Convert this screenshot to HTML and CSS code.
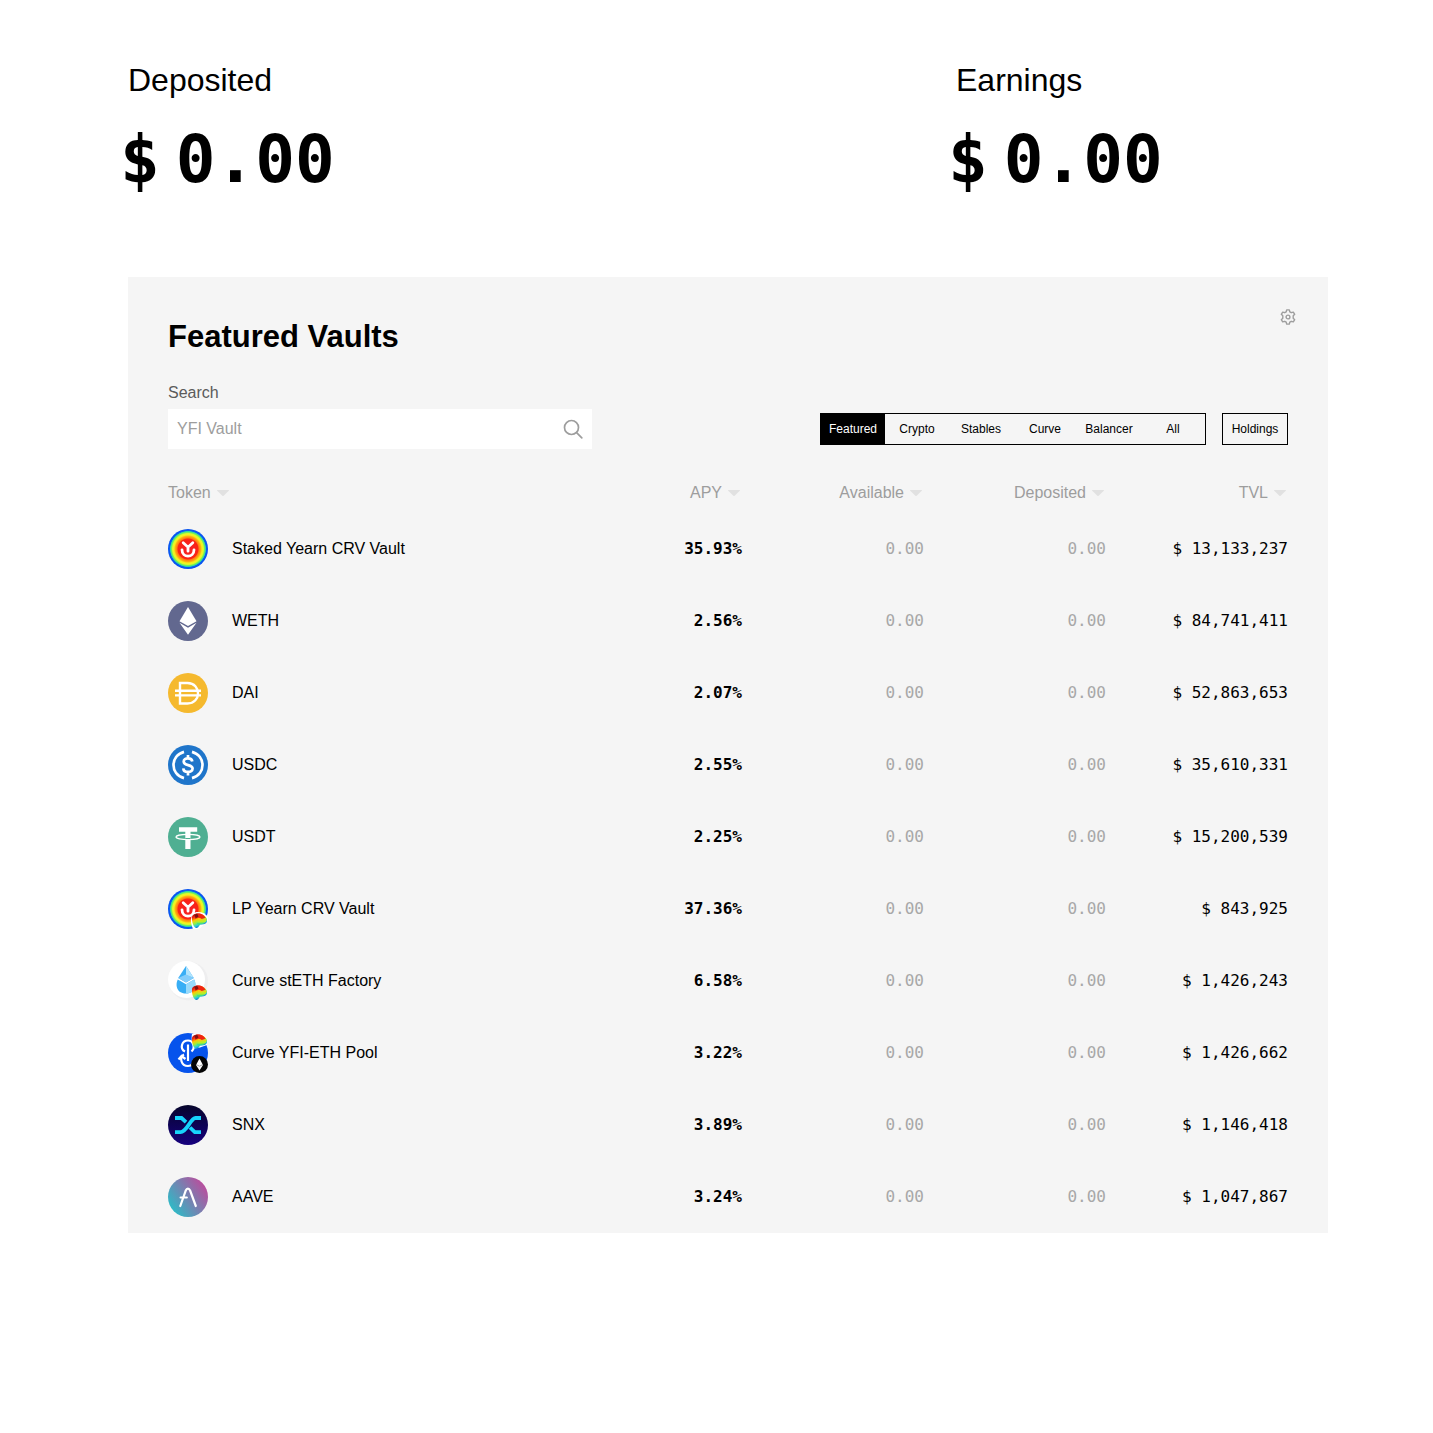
FILE: index.html
```html
<!DOCTYPE html>
<html lang="en">
<head>
<meta charset="utf-8">
<title>Vaults</title>
<meta name="viewport" content="width=device-width, initial-scale=1">
<link rel="stylesheet" href="styles.css">
</head>
<body>
<svg class="sprite" aria-hidden="true">
  <defs>
    <radialGradient id="rainbow">
      <stop offset="0" stop-color="#f5222b"/><stop offset=".5" stop-color="#fa2415"/>
      <stop offset=".55" stop-color="#ff7a12"/><stop offset=".64" stop-color="#ffb010"/>
      <stop offset=".7" stop-color="#f4f01e"/><stop offset=".77" stop-color="#e0fb28"/><stop offset=".82" stop-color="#7fee55"/>
      <stop offset=".88" stop-color="#29d9a5"/><stop offset=".91" stop-color="#0a5df2"/>
      <stop offset="1" stop-color="#0650ee"/>
    </radialGradient>
    <linearGradient id="curve-fill" x1="0" y1="0" x2=".5" y2="1">
      <stop offset="0" stop-color="#8c0d12"/><stop offset=".25" stop-color="#f22310"/>
      <stop offset=".45" stop-color="#ffc800"/><stop offset=".62" stop-color="#9cf03c"/>
      <stop offset=".8" stop-color="#20cfe0"/><stop offset="1" stop-color="#1440c8"/>
    </linearGradient>
    <linearGradient id="snx-fill" x1="0" y1="0" x2="0" y2="1"><stop offset="0" stop-color="#06052b"/><stop offset="1" stop-color="#16007e"/></linearGradient>
    <linearGradient id="aave-fill" x1="0" y1=".85" x2="1" y2=".15"><stop offset=".08" stop-color="#2ebac6"/><stop offset=".9" stop-color="#b6509e"/></linearGradient>
    <symbol id="caret" viewBox="0 0 16 16"><path d="M2.500 5h11c.5 0 .6.400.3.700L8.600 10.800a.9.9 0 0 1-1.200 0L2.200 5.700C1.900 5.400 2 5 2.500 5z" fill="currentColor"/></symbol>
    <symbol id="curve" viewBox="0 0 16 16">
      <path d="M0 4C1 0 8-.5 12 2c3 1.500 4.500 4 4 7-.5 2.500-3.500 3.500-7 3.200C7.500 13 7 16 4.500 16 1.500 15.500-.5 9 0 4z" fill="url(#curve-fill)"/>
      <path d="M4 .8C8 0 12.500 1.500 14.500 5l-4 1.500L7.500 5 3 6z" fill="#f0240f"/>
      <path d="M7 5l4 1.800 4-1.300c1.300 2-.5 4.300-4 4.700L6 9.500z" fill="#fbc912"/>
      <path d="M6 8.300l9.800-1c-.5 2.700-3.300 3.700-5.800 3.700H6z" fill="#b8ee25"/>
      <path d="M5 10.500l8.500-.3c-1.500 1.800-3 2-5 2L7 13.500z" fill="#42df84"/>
      <path d="M2.500 1.800l3-1 1.500 3-3 1.800z" fill="#7d1111"/>
    </symbol>
    <symbol id="styfi" viewBox="0 0 40 40">
      <circle cx="20" cy="20" r="20" fill="url(#rainbow)"/>
      <g fill="none" stroke="#fff" stroke-width="2.800" stroke-linecap="round"><path d="M15.200 13.800l4.800 4.400 4.800-4.400M20 18.200v4M14 20.800c0 8.500 12 8.500 12 0"/></g>
    </symbol>
    <symbol id="weth" viewBox="0 0 40 40"><circle cx="20" cy="20" r="20" fill="#62688f"/><path d="M20 6l8.500 14.200L20 25l-8.500-4.800z" fill="#fff"/><path d="M11.500 21.800L20 26.800l8.500-5L20 33.800z" fill="#fff"/></symbol>
    <symbol id="dai" viewBox="0 0 40 40"><circle cx="20" cy="20" r="20" fill="#f5b92e"/><g fill="none" stroke="#fff" stroke-width="2.400"><path d="M12 10h7.500c14 0 14 20.500 0 20.500H12zM7 17.800h26M7 22.400h26"/></g></symbol>
    <symbol id="usdc" viewBox="0 0 40 40"><circle cx="20" cy="20" r="20" fill="#1f75ca"/><g fill="none" stroke="#fff" stroke-width="2.700"><path d="M16 6.900c-14 4-14 22.200 0 26.200M24 6.900c14 4 14 22.200 0 26.200M20 10v3.500M20 27v3.500M24.300 16.500c-.4-4-8.600-4.200-8.600.1 0 4.600 8.900 2.500 8.900 7 0 4.500-9 4.500-9.300-.3"/></g></symbol>
    <symbol id="usdt" viewBox="0 0 40 40"><circle cx="20" cy="20" r="20" fill="#4faf92"/><path d="M11 10.200h18.200v4.500h-6.700V32h-5.200V14.700H11z" fill="#fff"/><ellipse cx="20" cy="20" rx="12" ry="2.600" fill="none" stroke="#fff" stroke-width="1.300"/><path d="M17.300 21.500h5.200" stroke="#4faf92" stroke-width="1"/></symbol>
    <symbol id="lpycrv" viewBox="0 0 40 40"><use href="#styfi" width="40" height="40"/><path d="M25 40c-3-6-3-14 2-16.500 6-1.500 13 1.500 14 7.500L31 40z" fill="#fff"/><use href="#curve" x="24" y="24" width="15" height="15"/></symbol>
    <symbol id="steth" viewBox="0 0 40 40">
      <circle cx="20.500" cy="20" r="19.500" fill="#eeeeef"/><circle cx="18.500" cy="18.500" r="18.500" fill="#fff"/>
      <path d="M18 5l7.800 12L18 21.500 10.200 17z" fill="#38aef5"/><path d="M18 5l7.800 12L18 14z" fill="#b2e4fd"/><path d="M10.200 17L18 13.500l7.800 3.500L18 21.500z" fill="#83cdfb"/>
      <path d="M9.800 18.500L18 23.300l8.200-4.800c2.500 4.500 1.700 14-8.200 14S7.300 23 9.800 18.500z" fill="#38aef5"/><path d="M18 23.300l8.200-4.800c2.500 4.500 1.700 14-8.200 14z" fill="#99dafb"/>
      <use href="#curve" x="24" y="24" width="15" height="15"/>
    </symbol>
    <symbol id="yfieth" viewBox="0 0 40 40">
      <circle cx="20" cy="20" r="20" fill="#0653ec"/>
      <g fill="none" stroke="#fff" stroke-width="2.200"><path d="M20 11.500v16.500M23.500 18.500c4-3.500 2-11-3.500-11-6.500 0-8.500 8.500-3 11M16 21.500c-5 2.500-3 11.500 4 11.500 4 0 6.500-3 6-7M10.500 26.500l3-3.500 4 3"/></g>
      <path d="M24 1h9c5 1 7 6 6 11l-7 2.500-5 1c-3-3-4-10-3-14.500z" fill="#fff"/><use href="#curve" x="24" y="1" width="15" height="15"/>
      <circle cx="31.500" cy="31.500" r="8.500" fill="#050505"/><path d="M31.500 25.500l3.500 6.500-3.500 5.500-3.500-5.500z" fill="#fff"/><path d="M28 31.500l3.500 1.700 3.500-1.700" fill="none" stroke="#777" stroke-width=".7"/>
    </symbol>
    <symbol id="snx" viewBox="0 0 40 40"><circle cx="20" cy="20" r="20" fill="url(#snx-fill)"/><g fill="none" stroke="#17d3fb" stroke-width="3.800"><path d="M7 13h6.500L18 17.200M33 13h-5.500c-5 0-8.500 14.200-15 14.200H7M22 22.500l4.800 4.700H33"/></g></symbol>
    <symbol id="aave" viewBox="0 0 40 40"><circle cx="20" cy="20" r="20" fill="url(#aave-fill)"/><path d="M12.300 29L17.800 13.500c1-2.600 3.200-2.600 4.300 0L27.800 29M12.600 20.500h6.200" fill="none" stroke="#fff" stroke-width="2.200" stroke-linecap="round"/></symbol>
  </defs>
</svg>

<main class="page">
  <section class="totals">
    <div class="total"><p class="total-label">Deposited</p><p class="total-value"><span>$</span><span>0.00</span></p></div>
    <div class="total"><p class="total-label">Earnings</p><p class="total-value"><span>$</span><span>0.00</span></p></div>
  </section>

  <section class="vaults">
    <header class="vaults-head">
      <h1 class="title">Featured Vaults</h1>
      <button class="settings" type="button" aria-label="Settings">
        <svg viewBox="0 0 16 16" width="16" height="16" fill="none" stroke="currentColor" stroke-width="1.400" stroke-linejoin="round"><path d="M6.700.900h2.600l.5 1.900 1.500.9 2-.6 1.400 2.200-1.500 1.500v2.400l1.500 1.500-1.400 2.200-2-.6-1.500.9-.5 1.900H6.700l-.5-1.900-1.500-.9-2 .6-1.400-2.200 1.500-1.500V6.800L1.300 5.300l1.400-2.200 2 .6 1.500-.9z"/><circle cx="8" cy="8" r="1.900"/></svg>
      </button>
    </header>

    <div class="toolbar">
      <div class="search">
        <label class="search-label" for="search">Search</label>
        <div class="search-box">
          <input id="search" class="search-input" type="text" placeholder="YFI Vault">
          <svg class="search-icon" viewBox="0 0 20 20" width="20" height="20" fill="none" stroke="currentColor" stroke-width="1.700" stroke-linecap="round"><circle cx="8.500" cy="8.500" r="7"/><path d="M13.600 13.600l5.200 5.200"/></svg>
        </div>
      </div>
      <div class="filters">
        <div class="segmented">
          <button class="filter active" type="button">Featured</button>
          <button class="filter" type="button">Crypto</button>
          <button class="filter" type="button">Stables</button>
          <button class="filter" type="button">Curve</button>
          <button class="filter" type="button">Balancer</button>
          <button class="filter" type="button">All</button>
        </div>
        <div class="segmented"><button class="filter" type="button">Holdings</button></div>
      </div>
    </div>

    <table class="table">
      <thead>
        <tr>
          <th class="col-token"><button class="sort" type="button">Token<svg class="caret"><use href="#caret"/></svg></button></th>
          <th><button class="sort" type="button">APY<svg class="caret"><use href="#caret"/></svg></button></th>
          <th><button class="sort" type="button">Available<svg class="caret"><use href="#caret"/></svg></button></th>
          <th><button class="sort" type="button">Deposited<svg class="caret"><use href="#caret"/></svg></button></th>
          <th><button class="sort" type="button">TVL<svg class="caret"><use href="#caret"/></svg></button></th>
        </tr>
      </thead>
      <tbody>
        <tr><td><div class="token"><svg class="logo"><use href="#styfi"/></svg>Staked Yearn CRV Vault</div></td><td class="apy">35.93%</td><td class="zero">0.00</td><td class="zero">0.00</td><td class="num">$ 13,133,237</td></tr>
        <tr><td><div class="token"><svg class="logo"><use href="#weth"/></svg>WETH</div></td><td class="apy">2.56%</td><td class="zero">0.00</td><td class="zero">0.00</td><td class="num">$ 84,741,411</td></tr>
        <tr><td><div class="token"><svg class="logo"><use href="#dai"/></svg>DAI</div></td><td class="apy">2.07%</td><td class="zero">0.00</td><td class="zero">0.00</td><td class="num">$ 52,863,653</td></tr>
        <tr><td><div class="token"><svg class="logo"><use href="#usdc"/></svg>USDC</div></td><td class="apy">2.55%</td><td class="zero">0.00</td><td class="zero">0.00</td><td class="num">$ 35,610,331</td></tr>
        <tr><td><div class="token"><svg class="logo"><use href="#usdt"/></svg>USDT</div></td><td class="apy">2.25%</td><td class="zero">0.00</td><td class="zero">0.00</td><td class="num">$ 15,200,539</td></tr>
        <tr><td><div class="token"><svg class="logo"><use href="#lpycrv"/></svg>LP Yearn CRV Vault</div></td><td class="apy">37.36%</td><td class="zero">0.00</td><td class="zero">0.00</td><td class="num">$ 843,925</td></tr>
        <tr><td><div class="token"><svg class="logo"><use href="#steth"/></svg>Curve stETH Factory</div></td><td class="apy">6.58%</td><td class="zero">0.00</td><td class="zero">0.00</td><td class="num">$ 1,426,243</td></tr>
        <tr><td><div class="token"><svg class="logo"><use href="#yfieth"/></svg>Curve YFI-ETH Pool</div></td><td class="apy">3.22%</td><td class="zero">0.00</td><td class="zero">0.00</td><td class="num">$ 1,426,662</td></tr>
        <tr><td><div class="token"><svg class="logo"><use href="#snx"/></svg>SNX</div></td><td class="apy">3.89%</td><td class="zero">0.00</td><td class="zero">0.00</td><td class="num">$ 1,146,418</td></tr>
        <tr><td><div class="token"><svg class="logo"><use href="#aave"/></svg>AAVE</div></td><td class="apy">3.24%</td><td class="zero">0.00</td><td class="zero">0.00</td><td class="num">$ 1,047,867</td></tr>
      </tbody>
    </table>
  </section>
</main>
</body>
</html>
```
FILE: styles.css
```css
* { box-sizing: border-box; }

body {
  margin: 0;
  background: #fff;
  color: #000;
  font-family: "Liberation Sans", Arial, sans-serif;
  font-size: 16px;
  line-height: 24px;
}

button {
  padding: 0;
  border: 0;
  background: none;
  color: inherit;
  font: inherit;
  cursor: pointer;
}

.sprite { display: block; width: 0; height: 0; }

.page { padding: 64px 105px 64px 128px; }

.totals {
  display: grid;
  grid-template-columns: 1fr 31%;
  margin-bottom: 77px;
}

.total-label {
  margin: 0 0 24px;
  font-size: 32px;
  line-height: 32px;
}

.total-value {
  display: flex;
  gap: 16px;
  margin: 0 0 0 -8px;
  font-family: "DejaVu Sans Mono", monospace;
  font-size: 66px;
  font-weight: 700;
  line-height: 80px;
}

.vaults {
  padding: 40px 40px 0;
  background: #f5f5f5;
}

.vaults-head {
  display: flex;
  align-items: flex-start;
  justify-content: space-between;
  margin-bottom: 24px;
}

.title {
  margin: 0;
  font-size: 31px;
  line-height: 40px;
}

.settings {
  display: flex;
  margin: -8px -8px 0 0;
  color: #9d9d9d;
}

.toolbar {
  display: flex;
  align-items: flex-end;
  justify-content: space-between;
  margin-bottom: 24px;
}

.search { width: 424px; }

.search-label {
  display: block;
  margin-bottom: 4px;
  color: #5b5b5b;
}

.search-box {
  display: flex;
  align-items: center;
  height: 40px;
  padding: 0 9px;
  background: #fff;
  color: #9d9d9d;
}

.search-input {
  flex: 1;
  min-width: 0;
  height: 40px;
  padding: 0;
  border: 0;
  outline: 0;
  background: none;
  color: #000;
  font: inherit;
}

.search-input::placeholder { color: #9d9d9d; opacity: 1; }

.filters {
  display: flex;
  gap: 16px;
  padding-bottom: 4px;
}

.segmented {
  display: flex;
  border: 1px solid #000;
}

.filter {
  width: 64px;
  height: 30px;
  font-size: 12px;
  line-height: 16px;
}

.filter.active { background: #000; color: #fff; }

.table {
  width: 100%;
  table-layout: fixed;
  border-collapse: collapse;
}

.table th {
  height: 40px;
  padding: 0;
  color: #9d9d9d;
  font-weight: 400;
  text-align: right;
}

.table .col-token { width: 35%; text-align: left; }

.sort {
  display: inline-flex;
  align-items: center;
  gap: 4px;
  vertical-align: middle;
}

.caret { width: 16px; height: 16px; color: #e1e1e1; }

.table td { height: 72px; padding: 0; }

.token {
  display: flex;
  align-items: center;
  gap: 24px;
}

.logo { width: 40px; height: 40px; }

.apy,
.zero,
.num {
  font-family: "DejaVu Sans Mono", monospace;
  font-size: 16px;
  text-align: right;
}

.apy { font-weight: 700; }

.zero { color: #a8a8a8; }
```
